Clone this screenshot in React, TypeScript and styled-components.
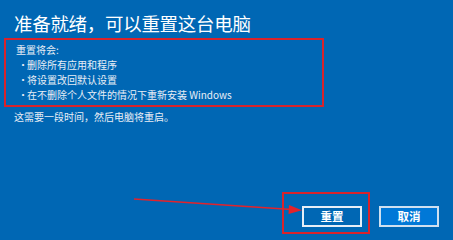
import styled, { createGlobalStyle } from 'styled-components';

const GlobalStyle = createGlobalStyle`
  html, body {
    margin: 0;
    padding: 0;
    background: #0067b4;
  }
  body {
    font-family: 'Noto Sans CJK SC', 'Noto Sans', sans-serif;
  }
`;

const RESET_ITEMS = [
  '删除所有应用和程序',
  '将设置改回默认设置',
  '在不删除个人文件的情况下重新安装 Windows',
];

const App = () => {
  return (
    <>
      <GlobalStyle />
      <Screen>
        <Title>准备就绪，可以重置这台电脑</Title>
        <Highlight>
          <Lead>重置将会:</Lead>
          <ItemList>
            {RESET_ITEMS.map(item => (
              <Item key={item}>{item}</Item>
            ))}
          </ItemList>
        </Highlight>
        <Note>这需要一段时间，然后电脑将重启。</Note>
        <ButtonRow>
          <Marked>
            <Button>重置</Button>
            <MarkBox />
          </Marked>
          <Button $primary>取消</Button>
        </ButtonRow>
        <Arrow width="453" height="240" viewBox="0 0 453 240">
          <line x1="134" y1="199" x2="292" y2="209.5" stroke="#e3232b" strokeWidth="1.6" />
          <polygon points="302,210.2 289,205 288.5,214" fill="#e3232b" />
        </Arrow>
      </Screen>
    </>
  );
};

export default App;

const Screen = styled.div`
  position: relative;
  display: flex;
  flex-direction: column;
  box-sizing: border-box;
  width: 453px;
  height: 240px;
  padding: 10px 14px 0 14px;
  background: #0067b4;
  color: #ffffff;
  overflow: hidden;
`;

const Title = styled.h1`
  margin: 0;
  font-size: 18.5px;
  line-height: 26px;
  font-weight: 400;
  letter-spacing: -0.3px;
`;

const Highlight = styled.div`
  margin: 2px 0 0 -10px;
  width: 320px;
  box-sizing: border-box;
  padding: 2px 0 3px 10px;
  border: 2px solid #d9232b;
`;

const Lead = styled.div`
  font-size: 10px;
  line-height: 15px;
  color: #e8eef6;
`;

const ItemList = styled.ul`
  margin: 0;
  padding: 0;
  list-style: none;
`;

const Item = styled.li`
  position: relative;
  padding-left: 11px;
  font-size: 10px;
  line-height: 15px;
  color: #e8eef6;

  &::before {
    content: '•';
    position: absolute;
    left: 2px;
    top: 0;
  }
`;

const Note = styled.div`
  margin-top: 2px;
  font-size: 10px;
  line-height: 15px;
  color: #e8eef6;
`;

const ButtonRow = styled.div`
  display: flex;
  justify-content: flex-end;
  gap: 17px;
  margin-top: auto;
  margin-bottom: 13px;
`;

const Marked = styled.div`
  position: relative;
`;

const MarkBox = styled.div`
  position: absolute;
  top: -14px;
  left: -20px;
  right: -8px;
  bottom: -7px;
  border: 2px solid #d9232b;
  pointer-events: none;
`;

const Button = styled.button<{ $primary?: boolean }>`
  display: block;
  width: 60px;
  height: 21px;
  box-sizing: border-box;
  padding: 0;
  border: 2px solid ${p => (p.$primary ? '#cfe0f0' : '#e6eef7')};
  background: ${p => (p.$primary ? '#0078d7' : '#0067b4')};
  color: #ffffff;
  font-family: 'Noto Sans CJK SC', 'Noto Sans', sans-serif;
  font-size: 11.5px;
  font-weight: 700;
  line-height: 17px;
  cursor: pointer;
`;

const Arrow = styled.svg`
  position: absolute;
  left: 0;
  top: 0;
  pointer-events: none;
`;
